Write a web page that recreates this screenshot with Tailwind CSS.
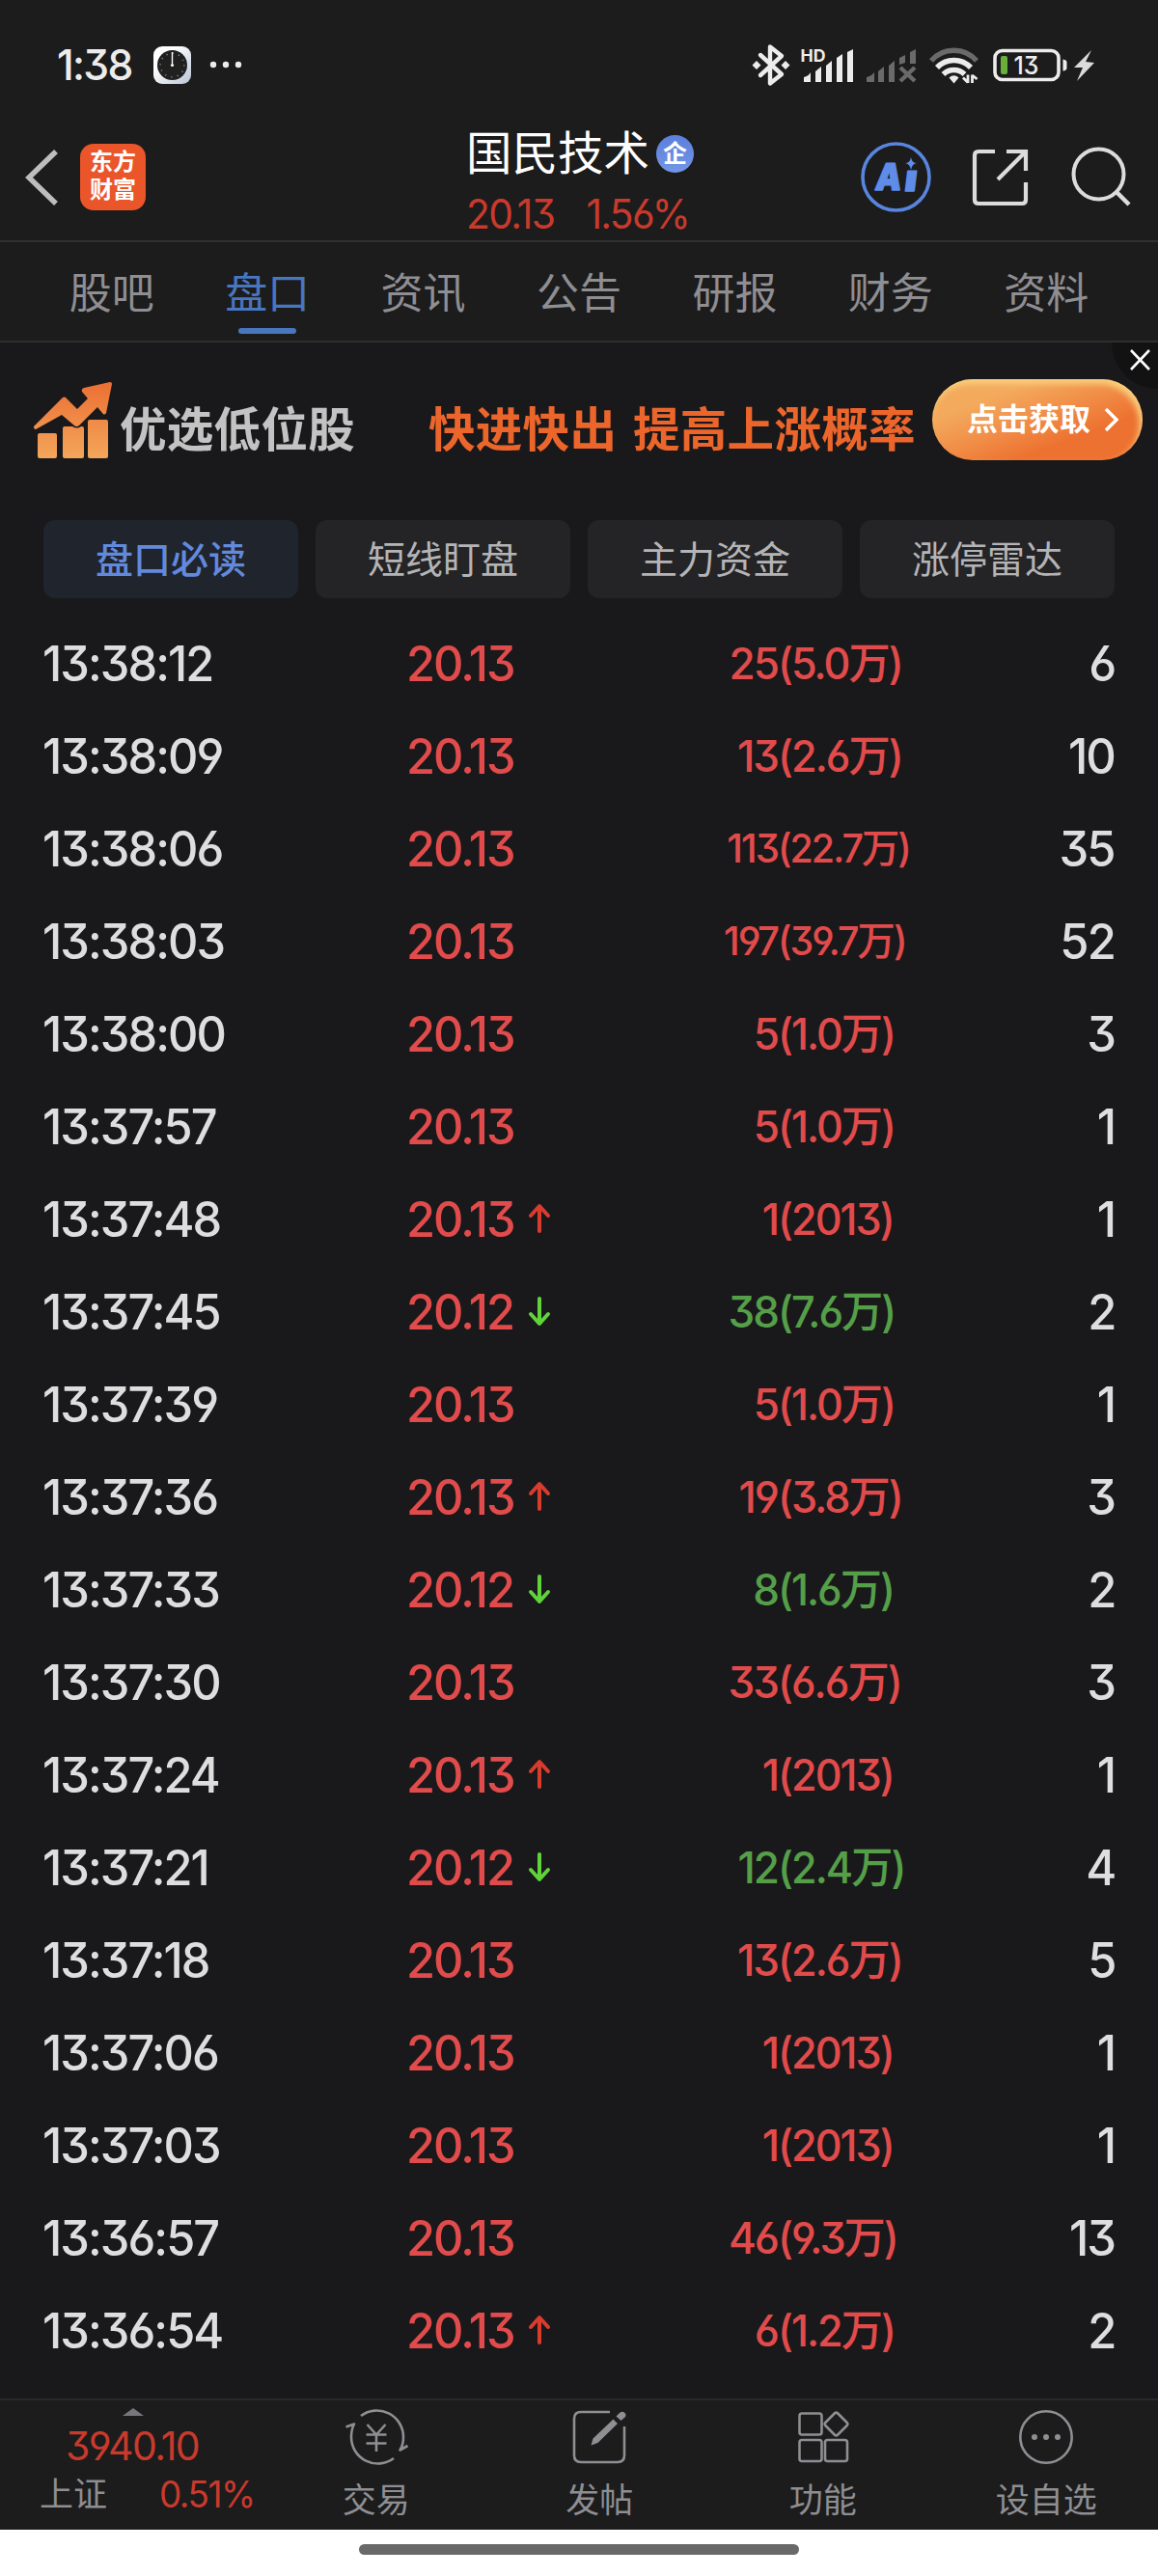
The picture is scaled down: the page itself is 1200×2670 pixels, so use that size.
<!DOCTYPE html>
<html lang="zh-CN">
<head>
<meta charset="UTF-8">
<title>国民技术 20.13</title>
<script src="https://cdn.jsdelivr.net/npm/@tailwindcss/browser@4"></script>
</head>
<body class="w-[1200px] h-[2670px] overflow-hidden bg-[#19191b] flex flex-col font-['Inter','Noto_Sans_CJK_SC',sans-serif] [font-feature-settings:'cv03','cv04','cv09'] text-[#dedede]">

<!-- Header -->
<header class="h-[251px] shrink-0 bg-[#1c1c1c] border-b-2 border-[#303030] flex flex-col">
  <!-- Status bar -->
  <div class="h-[104px] pt-[30px] flex justify-between">
    <div class="h-[74px] pl-[59px] flex items-center text-[#ececec]">
      <span class="w-[100px] text-[44px] leading-none font-medium tracking-[-0.04em] origin-left scale-x-[.97]">1:38</span>
      <svg class="w-[39px] h-[39px]" viewBox="0 0 39 39">
        <defs><linearGradient id="clk" x1="0" y1="0" x2="1" y2="1"><stop offset=".3" stop-color="#fff"/><stop offset="1" stop-color="#b9c4d6"/></linearGradient></defs>
        <rect width="39" height="39" rx="9" fill="url(#clk)"/>
        <circle cx="19.5" cy="19.5" r="15.5" fill="#202020"/>
        <circle cx="19.5" cy="19.5" r="12.3" fill="none" stroke="#999" stroke-width="1.6" stroke-dasharray="1 5.44"/>
        <path d="M19.5 6v12" stroke="#fff" stroke-width="1.4"/><circle cx="19.5" cy="19.5" r="1.6" fill="#fff"/>
      </svg>
      <svg class="w-[34px] h-[8px] ml-[19px]" viewBox="0 0 34 8" fill="#ececec"><circle cx="4" cy="4" r="3.2"/><circle cx="17" cy="4" r="3.2"/><circle cx="30" cy="4" r="3.2"/></svg>
    </div>
    <svg class="w-[390px] h-[70px] mr-[40px]" viewBox="770 30 390 70" fill="#ececec">
      <path d="M788 57l22 20-12 9.500v-38l12 9.500-22 20" fill="none" stroke="#ececec" stroke-width="4.400" stroke-linejoin="round" stroke-linecap="round"/>
      <path d="M784 63l4.500 4.500-4.500 4.500-4.500-4.500zM814 63l4.500 4.500-4.500 4.500-4.500-4.500z"/>
      <text x="829.500" y="63.500" font-size="17" font-weight="700" textLength="26" lengthAdjust="spacingAndGlyphs">HD</text>
      <path d="M833 80q5-1 7-5v10h-7zM845 74l6-5v16h-6zM856 68l6-5v22h-6zM867 60l6-4v29h-6zM878 54l6-3v34h-6z"/>
      <path fill="#6a6a6a" d="M898 80q5-1 8-5v10h-8zM910 74l6-5v16h-6zM921 68l6-5v22h-6zM932 60l6-3v8l-6 2zM943 54l6-3v15h-6z"/>
      <path d="M933 70l15 14M948 70l-15 14" stroke="#6a6a6a" stroke-width="4.400"/>
      <g fill="none" stroke-width="5.500">
        <path d="M965 63a31 31 0 0 1 47 0" stroke="#6a6a6a"/>
        <path d="M971 70a24 24 0 0 1 35 0M977.500 77a15.500 15.500 0 0 1 22 0" stroke="#ececec"/>
      </g>
      <path d="M983.500 80.500q5-4.500 10 0l-5 6z"/>
      <path d="M1003 77.500v8.500M1007.500 86v-8.500M1003 85.500l-5-5M1007.500 78l5 4" stroke="#ececec" stroke-width="2.800"/>
      <rect x="1031" y="52.500" width="66" height="30" rx="7.500" fill="none" stroke="#ececec" stroke-width="3.600"/>
      <path d="M1101.500 61.500q4 .5 4 3v6q0 2.500-4 3z"/>
      <rect x="1037" y="58" width="7" height="19" rx="2" fill="#68b03a"/>
      <text x="1050.500" y="77" font-size="26" font-weight="500" textLength="26" lengthAdjust="spacingAndGlyphs">13</text>
      <path fill="#dadada" d="M1131 52l-18 18h9l-6 14 18-19-9-1z"/>
    </svg>
  </div>

  <!-- Title row -->
  <div class="flex-1 grid grid-cols-3">
    <div class="pl-[26px] pt-[44px] flex">
      <svg class="w-[34px] h-[58px] mt-[7px]" viewBox="0 0 34 58"><path d="M30 4L4 29l26 25" fill="none" stroke="#bdbdbd" stroke-width="5.500" stroke-linecap="square"/></svg>
      <div class="w-[68px] h-[69px] ml-[23px] mt-px rounded-[14px] bg-[#ea5529] text-white text-[24px] leading-[29px] font-bold text-center pt-[4px]">东方<br>财富</div>
    </div>
    <div class="pl-[83px] pt-[28px] whitespace-nowrap">
      <div class="flex items-center h-[54px]">
        <span class="text-[47.500px] text-white">国民技术</span>
        <span class="w-[39px] h-[39px] ml-[7px] rounded-full bg-linear-to-b from-[#5c7fdc] to-[#7396e6] text-white text-[25px] font-bold leading-[38px] text-center">企</span>
      </div>
      <div class="flex gap-[34px] text-[42px] leading-[50px] mt-[11px] text-[#c83a2c] tracking-[-0.04em] origin-left scale-x-[.97]"><span>20.13</span><span>1.56%</span></div>
    </div>
    <svg class="w-[400px] h-[146px]" viewBox="800 104 400 146" fill="none">
      <circle cx="928.500" cy="183.500" r="34.500" stroke="#5885de" stroke-width="3.600"/>
      <g fill="#5f8ce8" stroke="#5f8ce8" stroke-width="1.500" stroke-linejoin="round" font-size="38" font-weight="900" transform="translate(906 196.500) skewX(-7)">
        <text x="0" y="0" textLength="27" lengthAdjust="spacingAndGlyphs">A</text>
        <text x="30.500" y="1" textLength="13" lengthAdjust="spacingAndGlyphs">ı</text>
      </g>
      <path d="M944 163q1 6 6 6-5 1-6 7-1-6-6-7 5 0 6-6z" fill="#5f8ce8"/>
      <path d="M1031 157h-17q-4 0-4 4v46q0 4 4 4h45q4 0 4-4v-18M1043 157h20v20M1062 158l-28 28" stroke="#dcdcdc" stroke-width="4.200"/>
      <circle cx="1138.500" cy="180.500" r="26" stroke="#dcdcdc" stroke-width="4"/><path d="M1157 199l13 13" stroke="#dcdcdc" stroke-width="4.500"/>
    </svg>
  </div>
</header>

<!-- Tabs -->
<nav class="h-[104px] shrink-0 px-[35px] bg-[#1c1c1c] border-b-2 border-[#2e2e2e] grid grid-cols-7 text-center text-[44px] leading-[106px] text-[#8e8e93]">
  <a>股吧</a>
  <a class="relative text-[#4876bf]">盘口<i class="absolute left-[51px] top-[89px] w-[60px] h-[6px] rounded-full bg-[#4876bf]"></i></a>
  <a>资讯</a>
  <a>公告</a>
  <a>研报</a>
  <a>财务</a>
  <a>资料</a>
</nav>

<!-- Promo banner -->
<section class="relative h-[184px] shrink-0 flex font-bold">
  <svg class="w-[82px] h-[80px] ml-[35px] mt-[41px]" viewBox="0 0 82 80">
    <defs><linearGradient id="up" x1="0" y1="0" x2="0" y2="1"><stop offset="0" stop-color="#ec6f33"/><stop offset="1" stop-color="#f3a65a"/></linearGradient></defs>
    <path fill="url(#up)" d="M0 46L30 16q2-1 3 0l12 12 11-11-6-7q-1-3 2-4L79 0q2 0 2 2l-6 30q-2 3-4 0l-5-6-19 19q-3 2-5 0L29 34 2 49q-2 0-2-3zM4 55q0-2 2-2h16q2 0 2 2v22q0 2-2 2H6q-2 0-2-2zM30 48q0-2 2-2h8q5 3 9 0h1q2 0 2 2v29q0 2-2 2H32q-2 0-2-2zM56 41q0-2 2-2h17q2 0 2 2v36q0 2-2 2H58q-2 0-2-2z"/>
  </svg>
  <span class="w-[320px] ml-[7px] text-[48.500px] leading-[181px] tracking-[0.3px] text-[#c3c3c3]">优选低位股</span>
  <span class="text-[48.500px] leading-[181px] tracking-[0.3px] text-[#ec662c] whitespace-nowrap [word-spacing:5px]">快进快出 提高上涨概率</span>
  <a class="absolute left-[966px] top-[38px] w-[218px] h-[84px] rounded-full bg-linear-to-br from-[#f3aa5d] from-25% to-[#ed7231] to-70% shadow-[inset_-3px_5px_6px_#f9cf7d] flex items-center pl-[36px] gap-[14px] text-[32px] text-white">点击获取
    <svg class="w-[16px] h-[26px]" viewBox="0 0 16 26"><path d="M2 2l11 11L2 24" fill="none" stroke="#fff" stroke-width="3.500"/></svg>
  </a>
  <svg class="absolute right-0 top-0 w-[48px] h-[48px]" viewBox="0 0 48 48"><path d="M0 0h48v48A48 48 0 0 1 0 0z" fill="#121213"/><path d="M20 8l19 20M39 8L20 28" stroke="#fff" stroke-width="2.600"/></svg>
</section>

<!-- Section buttons -->
<div class="h-[81px] shrink-0 px-[45px] grid grid-cols-4 gap-[18px] text-center text-[39px] leading-[81px] text-[#b4b4b6]">
  <a class="rounded-xl bg-[#1f242d] text-[#6289dc] font-medium">盘口必读</a>
  <a class="rounded-xl bg-[#242426]">短线盯盘</a>
  <a class="rounded-xl bg-[#242426]">主力资金</a>
  <a class="rounded-xl bg-[#242426]">涨停雷达</a>
</div>

<!-- Trade list, filled below -->
<main id="trades" class="pt-[19px] flex-1"></main>

<!-- Bottom bar -->
<footer class="h-[136px] shrink-0 bg-[#1c1c1c] border-t-2 border-[#29292a] grid grid-cols-[274px_repeat(4,1fr)] text-[35px] leading-[40px] text-[#8e8e93] text-center">
  <div class="pt-[8px] text-[#c83a2c]">
    <svg class="w-[22px] h-[8px] ml-[127px]" viewBox="0 0 22 8"><path d="M0 8L11 0l11 8z" fill="#77777b"/></svg>
    <div class="text-[41px] leading-[48px] mt-[7px] tracking-[-0.04em]">3940.10</div>
    <div class="flex pl-[41px] leading-[52px]"><span class="w-[124px] text-left text-[#8e8e93]">上证</span><span class="text-[38px] tracking-[-0.04em] origin-left scale-x-[.97]">0.51%</span></div>
  </div>
  <a class="pt-[8px]">
    <svg class="w-[68px] h-[60px] mx-auto mb-[15px]" viewBox="356.500 2496 68 60" fill="none" stroke="#8e8e93" stroke-width="2.600" stroke-linejoin="round">
      <path d="M374.500 2504a27.500 27.500 0 0 1 44 22q0 8-3.500 13.500l8-4.500M408.500 2548a27.500 27.500 0 0 1-44-22q0-8 3-13.500l-8.500 3"/>
      <path d="M381 2513l9.500 10.500 9.500-10.500M380 2523.500h21M380 2532.500h21M390.500 2523v18"/>
    </svg>交易</a>
  <a class="pt-[8px]">
    <svg class="w-[56px] h-[60px] mx-auto mb-[15px]" viewBox="594 2496 56 60" fill="none" stroke="#8e8e93" stroke-width="2.600">
      <path d="M633 2500h-30q-7 0-7 7v38q0 7 7 7h38q7 0 7-7v-30"/>
      <path d="M613.500 2534.500l2-7 21-20 4.500 4.500-20.500 20zM639.500 2504.500l4-4q3-1.500 5 .5t0 4.500l-4 3.500z" fill="#8e8e93" stroke="none"/>
    </svg>发帖</a>
  <a class="pt-[8px]">
    <svg class="w-[56px] h-[60px] mx-auto mb-[15px]" viewBox="825 2496 56 60" fill="none" stroke="#8e8e93" stroke-width="2.600">
      <rect x="828.500" y="2501.500" width="23" height="22" rx="2.500"/><rect x="828.500" y="2529" width="23" height="22" rx="2.500"/><rect x="855" y="2529" width="23" height="22" rx="2.500"/><rect x="857.500" y="2503.500" width="18" height="18" rx="2.500" transform="rotate(45 866.500 2512.500)"/>
    </svg>功能</a>
  <a class="pt-[8px]">
    <svg class="w-[60px] h-[60px] mx-auto mb-[15px]" viewBox="0 0 60 60"><circle cx="30" cy="30" r="26.700" fill="none" stroke="#8e8e93" stroke-width="2.600"/><g fill="#8e8e93"><circle cx="18" cy="30" r="3"/><circle cx="30" cy="30" r="3"/><circle cx="42" cy="30" r="3"/></g></svg>设自选</a>
</footer>

<!-- Gesture area -->
<div class="h-[48px] shrink-0 bg-white flex justify-center pt-[15px]"><div class="w-[456px] h-[11px] rounded-full bg-[#696969]"></div></div>

<script>
// time, price, direction, volume, amount, orders
const trades = [
  ['13:38:12', '20.13', '', '25', '(5.0万)', 6],
  ['13:38:09', '20.13', '', '13', '(2.6万)', 10],
  ['13:38:06', '20.13', '', '113', '(22.7万)', 35],
  ['13:38:03', '20.13', '', '197', '(39.7万)', 52],
  ['13:38:00', '20.13', '', '5', '(1.0万)', 3],
  ['13:37:57', '20.13', '', '5', '(1.0万)', 1],
  ['13:37:48', '20.13', 'up', '1', '(2013)', 1],
  ['13:37:45', '20.12', 'down', '38', '(7.6万)', 2],
  ['13:37:39', '20.13', '', '5', '(1.0万)', 1],
  ['13:37:36', '20.13', 'up', '19', '(3.8万)', 3],
  ['13:37:33', '20.12', 'down', '8', '(1.6万)', 2],
  ['13:37:30', '20.13', '', '33', '(6.6万)', 3],
  ['13:37:24', '20.13', 'up', '1', '(2013)', 1],
  ['13:37:21', '20.12', 'down', '12', '(2.4万)', 4],
  ['13:37:18', '20.13', '', '13', '(2.6万)', 5],
  ['13:37:06', '20.13', '', '1', '(2013)', 1],
  ['13:37:03', '20.13', '', '1', '(2013)', 1],
  ['13:36:57', '20.13', '', '46', '(9.3万)', 13],
  ['13:36:54', '20.13', 'up', '6', '(1.2万)', 2],
];

const arrows = {
  '': '',
  up: '<svg class="w-[24px] h-[32px]" viewBox="0 0 24 32"><path d="M12 29V4M3 13l9-10 9 10" fill="none" stroke="#d93c2d" stroke-width="4" stroke-linecap="round" stroke-linejoin="round"/></svg>',
  down: '<svg class="w-[24px] h-[32px]" viewBox="0 0 24 32"><path d="M12 3v25M3 19l9 10 9-10" fill="none" stroke="#5fd43a" stroke-width="4" stroke-linecap="round" stroke-linejoin="round"/></svg>',
};

document.getElementById('trades').innerHTML = trades.map(([time, price, dir, vol, amount, orders]) => {
  const color = dir === 'down' ? 'text-[#559f49]' : 'text-[#e14b4b]';
  const size = vol.length > 2 ? 'text-[41px]' : 'text-[45px]';
  return `
  <div class="h-[96px] pl-[44px] pr-[45px] flex items-center text-[51px] leading-none font-medium tracking-[-0.04em] whitespace-nowrap">
    <div class="w-[377px] origin-left scale-x-[.955]">${time}</div>
    <div class="w-[126px] text-[#e14b4b] origin-left scale-x-[.955]">${price}</div>
    <div class="w-[60px]">${arrows[dir]}</div>
    <div class="w-[199px] text-right ${color} ${size} origin-right scale-x-[.98]">${vol}</div>
    <div class="flex-1 ${color} ${size} origin-left scale-x-[.96]">${amount}</div>
    <div class="text-right origin-right scale-x-[.96]">${orders}</div>
  </div>`;
}).join('');
</script>
</body>
</html>
